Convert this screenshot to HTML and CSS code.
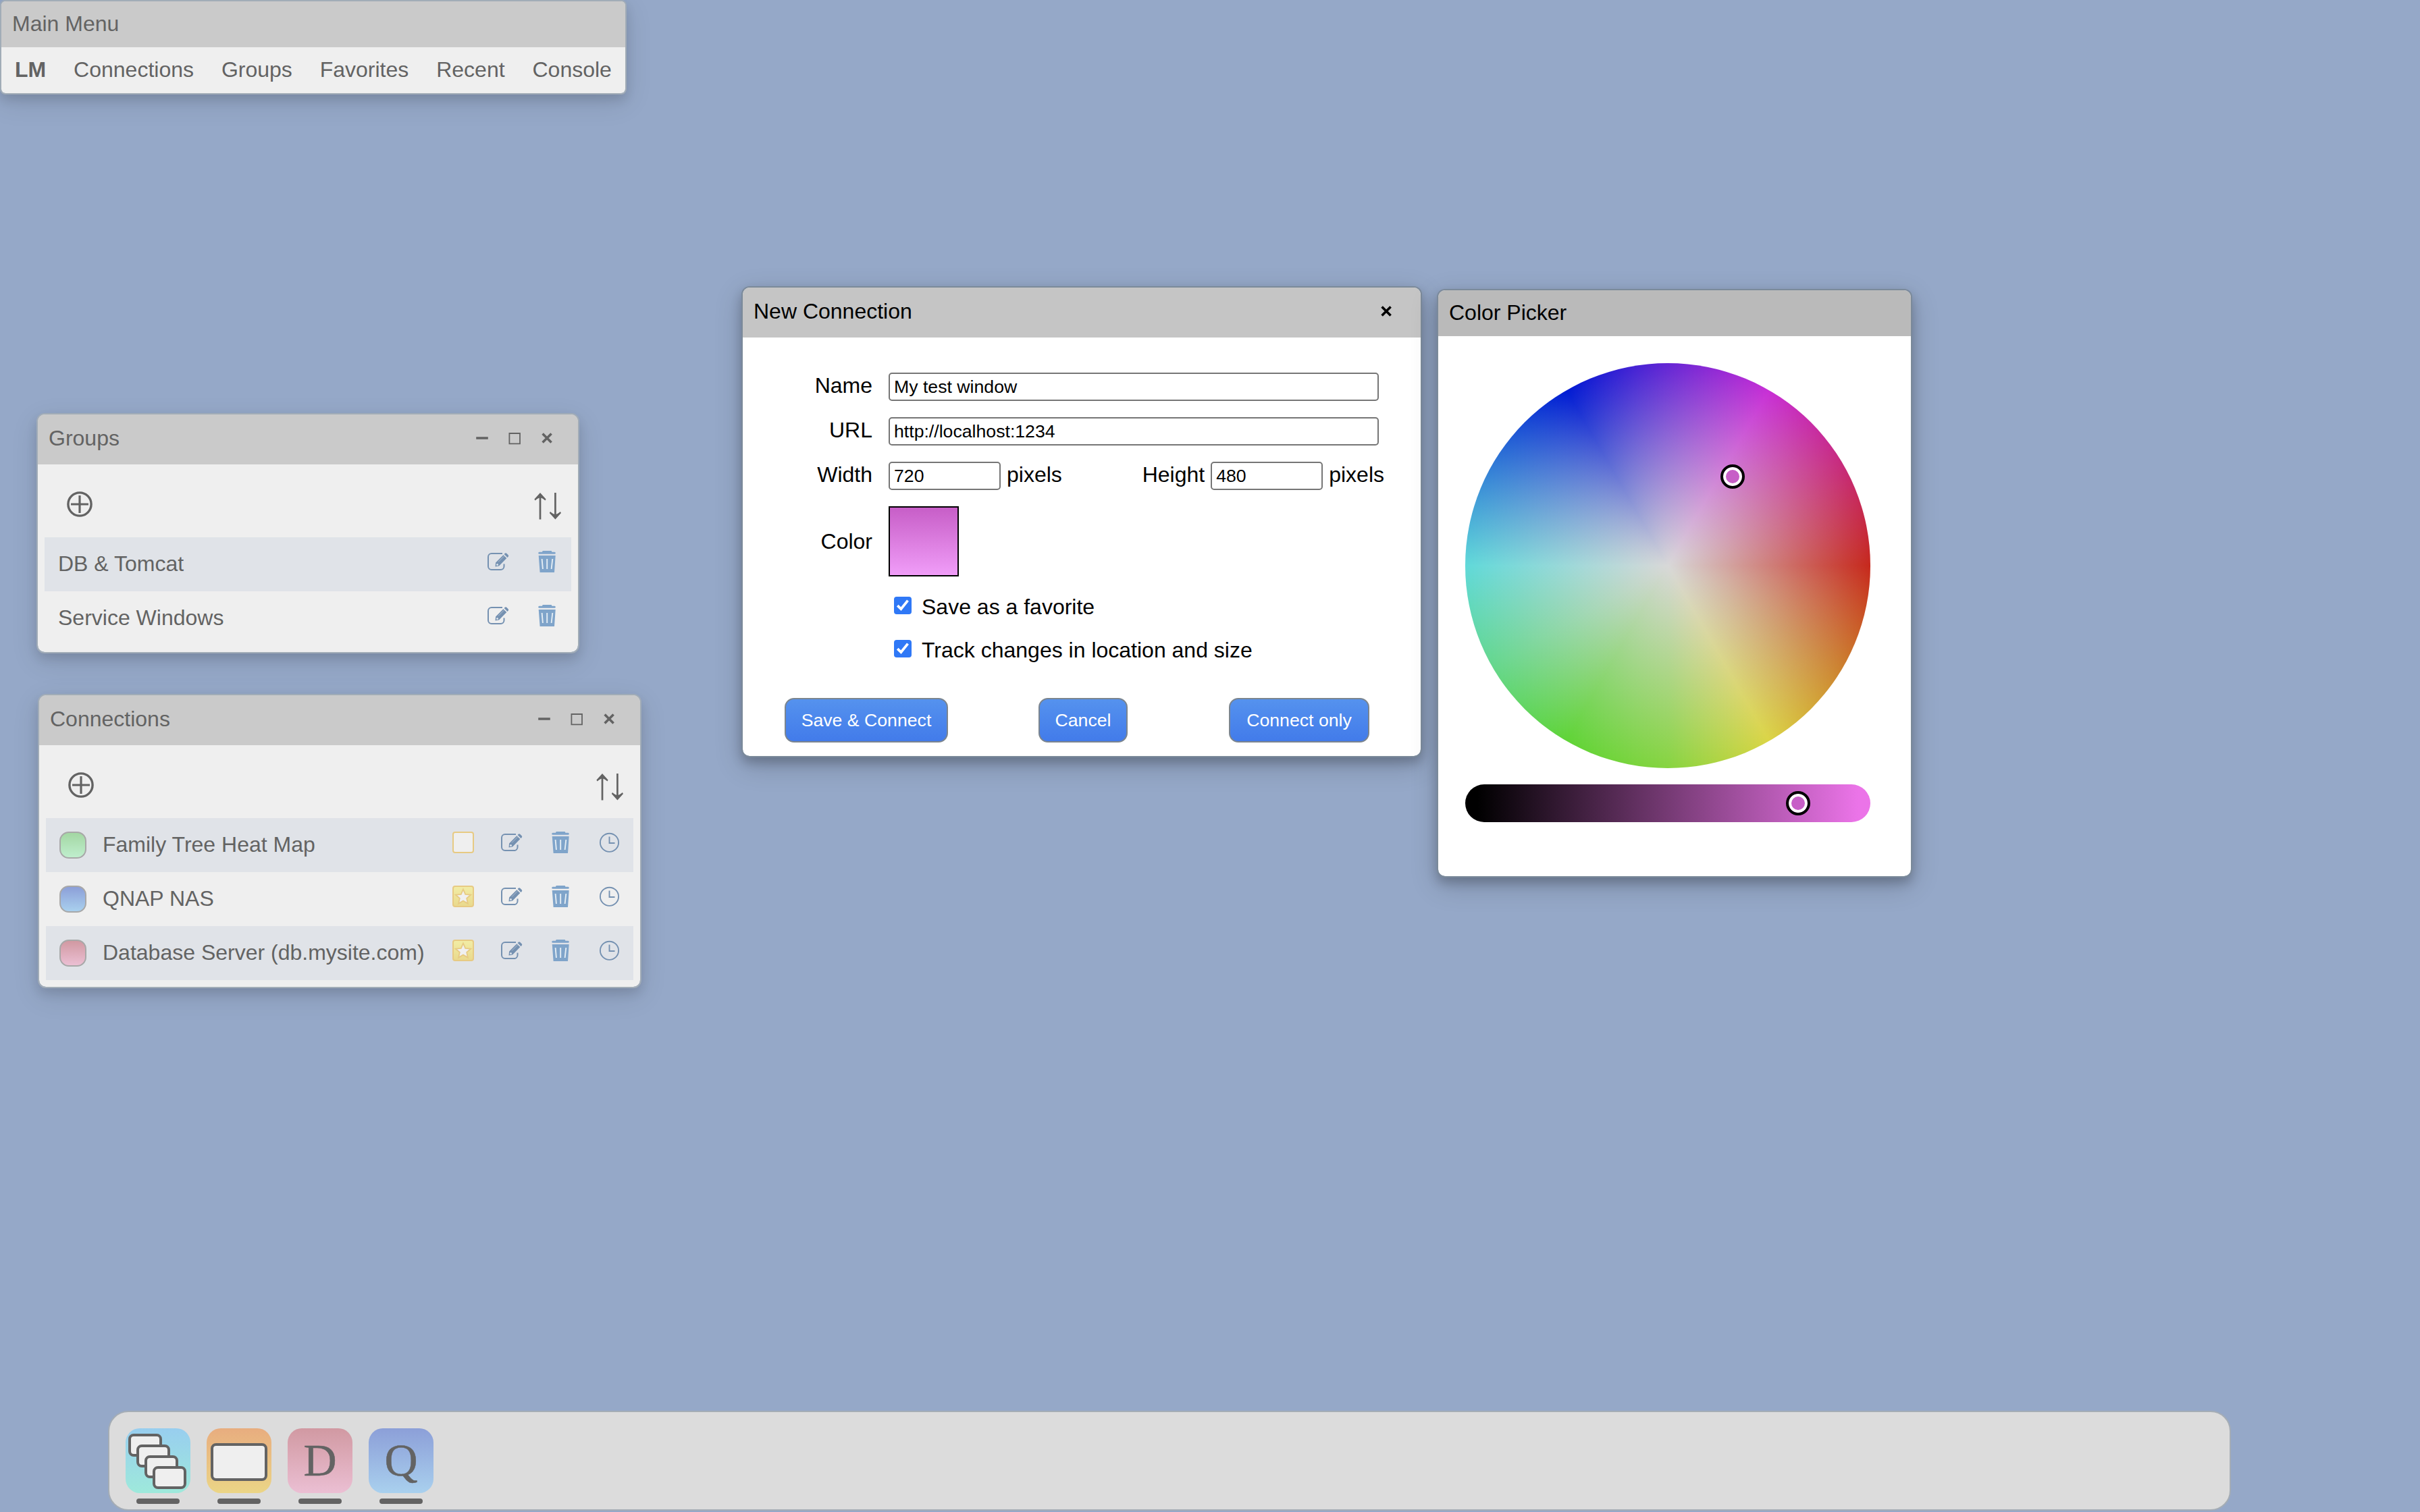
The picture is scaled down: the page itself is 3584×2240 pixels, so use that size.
FILE: index.html
```html
<!DOCTYPE html>
<html lang="en">
<head>
<meta charset="utf-8">
<title>Window Manager</title>
<link rel="stylesheet" href="styles.css">
</head>
<body>
<svg class="defs" width="0" height="0" aria-hidden="true">
  <defs>
    <linearGradient id="gold" x1="0" y1="0" x2="0" y2="1"><stop offset="0" stop-color="#f2eda6"/><stop offset="1" stop-color="#e9d98c"/></linearGradient>
    <symbol id="i-min" viewBox="0 0 20 20"><path d="M1.200 9h17.600" stroke="currentColor" stroke-width="3.600"/></symbol>
    <symbol id="i-max" viewBox="0 0 20 20"><path d="M2.400 2h15.600v15.400H2.400z" fill="none" stroke="currentColor" stroke-width="1.800"/></symbol>
    <symbol id="i-close" viewBox="0 0 20 20"><path d="M3.600 2.600l13 13M16.600 2.600l-13 13" fill="none" stroke="currentColor" stroke-width="3.600"/></symbol>
    <symbol id="i-add" viewBox="0 0 38 38"><circle cx="19" cy="19" r="17.100" fill="none" stroke="currentColor" stroke-width="3.400"/><path d="M19 6v26M6 19h26" stroke="currentColor" stroke-width="3.200"/></symbol>
    <symbol id="i-sort" viewBox="0 0 40 40"><path d="M8 39.500V3M30.400 0v37" fill="none" stroke="currentColor" stroke-width="2.700"/><path d="M8 0L16.600 9.600L15.400 11.600Q11 7.600 8 7.600T.6 11.600L-.6 9.600zM30.400 39.500L21.800 29.900L23 27.900Q27.400 31.900 30.400 31.900T37.800 27.900L39 29.900z" fill="currentColor"/></symbol>
    <symbol id="i-edit" viewBox="0 0 32 32"><path d="M22 4H6a5 5 0 0 0-5 5v14a5 5 0 0 0 5 5h13.500a5 5 0 0 0 5-5v-3.500" fill="none" stroke="#7591b1" stroke-width="2"/><path d="M11.500 23.500l.6-6L23.400 6.200l4.900 4.900-11.300 11.300zM24.600 5l1.200-1.200q1.200-1 2.400 0l2.500 2.500q1 1.200 0 2.400L29.500 9.900z" fill="#7591b1"/><path d="M16 16.500l8.300-8.300" stroke="#b5c3d4" stroke-width=".9"/><circle cx="14.500" cy="20.500" r="1.500" fill="#dce3ea"/></symbol>
    <symbol id="i-trash" viewBox="0 0 32 32"><path d="M9.800 0h12.800l.9 1.700h3.800q1.500 0 1.500 1.500T27.300 4.700H4.700Q3.200 4.700 3.200 3.200T4.700 1.700h4.200zM3.700 7h25L27 32H5.600z" fill="#7fa4ca"/><path d="M8.600 12l1.300 15M16.200 12v15M24.300 12l-1.700 15" stroke="#e4edf4" stroke-width="1.900"/></symbol>
    <symbol id="i-clock" viewBox="0 0 32 32"><circle cx="16.500" cy="16.300" r="13.600" fill="none" stroke="#7591b1" stroke-width="1.900"/><path d="M16.500 7.500v9.500h8" fill="none" stroke="#7591b1" stroke-width="1.900"/></symbol>
    <symbol id="i-fav-off" viewBox="0 0 32 32"><rect x="1" y="1" width="30" height="30" rx="3" fill="#efefef" stroke="#e7ca83" stroke-width="2"/></symbol>
    <symbol id="i-fav-on" viewBox="0 0 32 32"><rect x="1" y="1" width="30" height="30" rx="3" fill="url(#gold)" stroke="#e7ca83" stroke-width="2"/><path d="M16 5.500l3.200 7.300 8 .9-6 5.200 1.700 7.700-6.900-4-6.900 4 1.700-7.700-6-5.200 8-.9z" fill="#f0f0f0" stroke="#e7ca83" stroke-width="1.800"/></symbol>
  </defs>
</svg>

<section class="window inactive main-menu">
  <header class="titlebar">Main Menu</header>
  <nav class="menu"><b>LM</b><span>Connections</span><span>Groups</span><span>Favorites</span><span>Recent</span><span>Console</span></nav>
</section>

<section class="window inactive groups">
  <header class="titlebar"><span>Groups</span><span class="controls"><svg><use href="#i-min"/></svg><svg><use href="#i-max"/></svg><svg><use href="#i-close"/></svg></span></header>
  <div class="toolbar"><svg class="add"><use href="#i-add"/></svg><svg class="sort"><use href="#i-sort"/></svg></div>
  <div class="list">
    <div class="row"><span class="label">DB &amp; Tomcat</span><svg class="icon"><use href="#i-edit"/></svg><svg class="icon"><use href="#i-trash"/></svg></div>
    <div class="row"><span class="label">Service Windows</span><svg class="icon"><use href="#i-edit"/></svg><svg class="icon"><use href="#i-trash"/></svg></div>
  </div>
</section>

<section class="window inactive connections">
  <header class="titlebar"><span>Connections</span><span class="controls"><svg><use href="#i-min"/></svg><svg><use href="#i-max"/></svg><svg><use href="#i-close"/></svg></span></header>
  <div class="toolbar"><svg class="add"><use href="#i-add"/></svg><svg class="sort"><use href="#i-sort"/></svg></div>
  <div class="list">
    <div class="row"><i class="chip green"></i><span class="label">Family Tree Heat Map</span><svg class="icon"><use href="#i-fav-off"/></svg><svg class="icon"><use href="#i-edit"/></svg><svg class="icon"><use href="#i-trash"/></svg><svg class="icon"><use href="#i-clock"/></svg></div>
    <div class="row"><i class="chip blue"></i><span class="label">QNAP NAS</span><svg class="icon"><use href="#i-fav-on"/></svg><svg class="icon"><use href="#i-edit"/></svg><svg class="icon"><use href="#i-trash"/></svg><svg class="icon"><use href="#i-clock"/></svg></div>
    <div class="row"><i class="chip red"></i><span class="label">Database Server (db.mysite.com)</span><svg class="icon"><use href="#i-fav-on"/></svg><svg class="icon"><use href="#i-edit"/></svg><svg class="icon"><use href="#i-trash"/></svg><svg class="icon"><use href="#i-clock"/></svg></div>
  </div>
</section>

<section class="window new-connection">
  <header class="titlebar"><span>New Connection</span><span class="controls"><svg><use href="#i-close"/></svg></span></header>
  <form class="form">
    <div class="field"><label>Name</label><input class="wide" type="text" value="My test window"></div>
    <div class="field"><label>URL</label><input class="wide" type="text" value="http://localhost:1234"></div>
    <div class="field"><label>Width</label><input type="text" value="720"><span class="unit">pixels</span><span class="second">Height</span><input type="text" value="480"><span class="unit">pixels</span></div>
    <div class="field color"><label>Color</label><i class="swatch"></i></div>
    <div class="check"><svg viewBox="0 0 26 26"><rect width="26" height="26" rx="4"/><path d="M5.200 13.200l5.200 5L20.500 5.600"/></svg><span>Save as a favorite</span></div>
    <div class="check"><svg viewBox="0 0 26 26"><rect width="26" height="26" rx="4"/><path d="M5.200 13.200l5.200 5L20.500 5.600"/></svg><span>Track changes in location and size</span></div>
    <div class="buttons"><button type="button" class="save">Save &amp; Connect</button><button type="button" class="cancel">Cancel</button><button type="button" class="only">Connect only</button></div>
  </form>
</section>

<section class="window picker">
  <header class="titlebar">Color Picker</header>
  <div class="picker-body">
    <div class="wheel"><i class="handle"></i></div>
    <div class="slider"><i class="handle"></i></div>
  </div>
</section>

<footer class="dock">
  <div class="app"><div class="tile t1"><svg viewBox="0 0 96 96"><g class="frame"><rect x="6" y="10" width="46" height="30" rx="6"/><rect x="18" y="26" width="46" height="30" rx="6"/><rect x="30" y="42" width="46" height="30" rx="6"/><rect x="42" y="58" width="46" height="30" rx="6"/></g></svg></div><i></i></div>
  <div class="app"><div class="tile t2"><svg viewBox="0 0 96 96"><g class="frame"><rect x="8" y="24" width="80" height="52" rx="6"/></g></svg></div><i></i></div>
  <div class="app"><div class="tile t3">D</div><i></i></div>
  <div class="app"><div class="tile t4">Q</div><i></i></div>
</footer>
</body>
</html>
```
FILE: styles.css
```css
* { box-sizing: border-box; }
html, body { height: 100%; }
body {
  margin: 0;
  overflow: hidden;
  position: relative;
  background: #95a8c8;
  color: #000;
  font: 32px/36px "Liberation Sans", Arial, sans-serif;
}
svg { display: block; flex: none; }
symbol, use { overflow: visible; }
.defs { position: absolute; }

.window {
  position: absolute;
  border: 2px solid #7b8a9a;
  border-radius: 12px;
  background: #fff;
  background-clip: padding-box;
  overflow: hidden;
  box-shadow: 0 8px 16px rgba(0, 0, 0, .2), 0 12px 40px rgba(0, 0, 0, .19);
}
.window.inactive {
  border-color: #a1acb7;
  background-color: #efefef;
  color: #636363;
  box-shadow: 0 8px 16px rgba(0, 0, 0, .11), 0 12px 40px rgba(0, 0, 0, .11);
}
.titlebar {
  display: flex;
  justify-content: space-between;
  align-items: center;
  height: 74px;
  padding: 0 36px 4px 16px;
  background: #c5c5c5;
}
.inactive .titlebar { background: #cacaca; }
.controls { display: flex; gap: 28px; padding-top: 2px; }
.controls svg { width: 20px; height: 20px; }

.main-menu { left: 0; top: 0; width: 928px; height: 140px; border-radius: 8px; }
.main-menu .titlebar { height: 68px; padding: 0 16px 3px; }
.menu { display: flex; gap: 40.9px; padding: 15px 20px; }

.groups { left: 54px; top: 612px; width: 804px; height: 356px; }
.connections { left: 56px; top: 1028px; width: 894px; height: 436px; }
.toolbar {
  display: flex;
  justify-content: space-between;
  align-items: flex-start;
  height: 108px;
  padding: 40px 24px 0 43px;
}
.add { width: 38px; height: 38px; }
.sort { width: 40px; height: 40px; overflow: visible; margin-top: 2px; }
.list { padding: 0 10px; }
.row {
  display: flex;
  gap: 40px;
  height: 80px;
  padding: 20px 20px 0;
}
.row:nth-child(odd) { background: #e0e3e8; }
.label { flex: 1; padding-top: 1px; white-space: nowrap; }
.icon { width: 32px; height: 32px; }
.chip {
  width: 40px;
  height: 40px;
  margin-right: -16px;
  border: 2px solid #a8a8a8;
  border-radius: 14px;
}
.green { background: linear-gradient(#a3d7a3, #bfeecd); }
.blue { background: linear-gradient(#8c9fd8, #a9d0ee); }
.red { background: linear-gradient(#d199a2, #ebbfd3); }

.new-connection { left: 1098px; top: 424px; width: 1008px; height: 698px; }
.new-connection .titlebar { padding: 0 41px 4px 16px; }
.form { padding: 52px 0 0; }
.field { display: flex; align-items: flex-start; height: 66px; }
.field label { width: 192px; margin-right: 24px; padding-top: 1px; text-align: right; }
.field input {
  width: 166px;
  height: 42px;
  padding: 0 5px 0 6px;
  border: 2px solid #767676;
  border-radius: 5px;
  background: #fff;
  color: #000;
  font: 26.67px "Liberation Sans", Arial, sans-serif;
}
.field input.wide { width: 726px; }
.unit { margin-left: 9px; padding-top: 1px; }
.second { margin-left: auto; margin-right: 9px; padding-top: 1px; }
.field:nth-child(3) { padding-right: 54px; }
.color { height: 134px; align-items: center; padding-bottom: 30px; }
.color label { padding-bottom: 2px; }
.swatch {
  width: 104px;
  height: 104px;
  border: 2px solid #000;
  background: linear-gradient(#c75ec7, #f09df8);
}
.check { display: flex; height: 64px; padding-left: 224px; }
.check span { margin-top: -3px; }
.check svg { width: 26px; height: 26px; margin-right: 15px; }
.check rect { fill: #2f78f6; }
.check path { fill: none; stroke: #fff; stroke-width: 3.8; }
.buttons { display: flex; padding: 22px 0 0 62px; }
.buttons button {
  height: 66px;
  padding: 0;
  border: 2px solid #7b858f;
  border-radius: 14px;
  background: linear-gradient(#5592ee, #427bea);
  color: #fff;
  font: 26.67px "Liberation Sans", Arial, sans-serif;
}
.save { width: 242px; }
.cancel { width: 132px; margin: 0 150px 0 134px; }
.only { width: 208px; }

.picker { left: 2128px; top: 428px; width: 704px; height: 872px; }
.picker .titlebar { height: 68px; padding-bottom: 3px; background: #bababa; }
.picker-body { display: flex; flex-direction: column; gap: 24px; padding: 40px; }
.wheel {
  position: relative;
  width: 600px;
  height: 600px;
  border-radius: 50%;
  background:
    radial-gradient(closest-side, #d8d8d8, rgba(216, 216, 216, 0)),
    conic-gradient(from 90deg, #c6281c, #cc7f2e 30deg, #dbd546 60deg, #86d440 90deg, #5fd436 120deg, #65d78c 150deg, #60d9d9 180deg, #001bd3 240deg, #c82fd5 300deg, #c72a7a 330deg, #c6281c);
}
.slider {
  position: relative;
  width: 600px;
  height: 56px;
  border-radius: 28px;
  background: linear-gradient(90deg, #000 3%, #eb74e8 97%);
}
.handle {
  position: absolute;
  width: 36px;
  height: 36px;
  border: 4px solid #000;
  border-radius: 50%;
  background: #c75ec7;
  box-shadow: inset 0 0 0 4px #fff;
}
.wheel .handle { left: 378px; top: 150px; }
.slider .handle { left: 475px; top: 10px; }

.dock {
  position: absolute;
  left: 160px;
  top: 2090px;
  width: 3144px;
  height: 148px;
  display: flex;
  gap: 24px;
  padding: 24px 24px 0;
  border: 2px solid #a5adb5;
  border-radius: 30px;
  background: #dcdcdc;
}
.app { display: flex; flex-direction: column; align-items: center; gap: 8px; }
.app > i { width: 64px; height: 8px; border-radius: 4px; background: #636363; }
.tile {
  display: flex;
  justify-content: center;
  width: 96px;
  height: 96px;
  border-radius: 21px;
  color: #636363;
  font: 68px/94px "Liberation Serif", serif;
  -webkit-text-stroke: .5px #636363;
}
.t1 { background: linear-gradient(#98ceef, #9ee9db); }
.t2 { background: linear-gradient(#e8ad7f, #ebd586); }
.t3 { background: linear-gradient(#d199a2, #ebbfd3); }
.t4 { background: linear-gradient(#8c9fd8, #a9d0ee); }
.frame rect { fill: #efefef; stroke: #636363; stroke-width: 4; }
```
